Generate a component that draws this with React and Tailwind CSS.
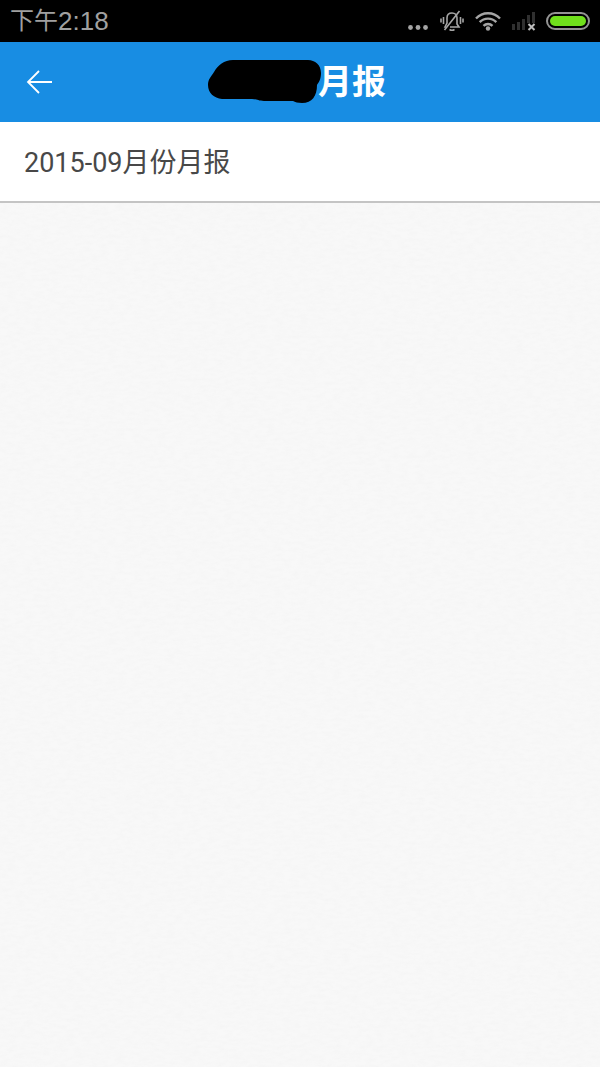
const reports = [{ id: 1, title: "2015-09月份月报" }];

const MutedBellIcon = () => (
  <svg
    className="h-6 w-6"
    viewBox="0 0 24 24"
    fill="none"
    stroke="#a5a5a5"
    strokeWidth="1.6"
    aria-hidden="true"
  >
    <path d="M10 18H19L17 15V9C17 6 15 4 12 4S7 6 7 9V14L5 18H6" />
    <path d="M9.500 20.500Q12 22 14.500 20.500M4.500 21L19.500 2" />
    <path d="M3.500 8v7M1 9.500v4M20.500 8v7M23 9.500v4" />
  </svg>
);

const WifiIcon = () => (
  <svg
    className="h-6 w-7"
    viewBox="0 0 28 24"
    fill="none"
    stroke="#a5a5a5"
    strokeWidth="2.4"
    aria-hidden="true"
  >
    <path d="M2 9.500C8.500 2.500 19.500 2.500 26 9.500" />
    <path d="M5.700 13.200c4.600-4.800 12-4.800 16.600 0" />
    <path d="M9.500 16.800c2.500-2.500 6.500-2.500 9 0" />
    <circle cx="14" cy="19.500" r="2.200" fill="#a5a5a5" stroke="none" />
  </svg>
);

const SignalIcon = () => (
  <svg className="h-6 w-6" viewBox="0 0 24 24" aria-hidden="true">
    <g fill="#303030">
      <rect x="0" y="15" width="3" height="6" />
      <rect x="5" y="13" width="3" height="8" />
      <rect x="10" y="10" width="3" height="11" />
      <rect x="15" y="6" width="3" height="8" />
      <rect x="20" y="3" width="3" height="11" />
    </g>
    <path d="M16.500 15l6 6M22.500 15l-6 6" stroke="#bdbdbd" strokeWidth="2" />
  </svg>
);

const StatusBar = () => (
  <div className="flex h-[42px] items-center justify-between bg-black px-2.5 text-[#a0a0a0]">
    <div className="flex items-center font-['Liberation_Sans','Noto_Sans_CJK_SC',sans-serif] leading-8">
      <span className="text-[24px]">下午</span>
      <span className="text-[26px]">2:18</span>
    </div>
    <div className="flex items-center">
      <svg className="mr-3 h-6 w-5" viewBox="0 0 20 24" fill="#a5a5a5" aria-hidden="true">
        <circle cx="2.500" cy="18.500" r="2.400" />
        <circle cx="10" cy="18.500" r="2.400" />
        <circle cx="17.500" cy="18.500" r="2.400" />
      </svg>
      <MutedBellIcon />
      <span className="ml-2.5">
        <WifiIcon />
      </span>
      <span className="ml-2.5">
        <SignalIcon />
      </span>
      <span className="ml-2.5 h-[18px] w-11 rounded-full border-2 border-[#949494] p-0.5">
        <span className="block h-full rounded-full bg-[#70e01c]" />
      </span>
    </div>
  </div>
);

const Header = () => (
  <header className="grid h-20 grid-cols-[80px_1fr_80px] items-center bg-[#188de3] text-white">
    <button type="button" aria-label="返回" className="flex h-full items-center pl-[26px]">
      <svg
        className="h-7 w-7"
        viewBox="0 0 28 28"
        fill="none"
        stroke="currentColor"
        strokeWidth="1.8"
        aria-hidden="true"
      >
        <path d="M26 14H2M13 3L2 14l11 11" />
      </svg>
    </button>
    <h1 className="flex items-center justify-center pr-1.5 pb-1 font-['Noto_Sans_CJK_SC',sans-serif] text-[34px] leading-[44px] font-bold">
      <svg className="-mr-1 h-11 w-[114px]" viewBox="0 0 114 44" overflow="visible" aria-hidden="true">
        <path d="M25 2H100C107 2 113 7 113 15C113 21 111 24 109 27C109 38 104 45 94 45C90 45 87 44 85 43H56C50 43 49 41 44 41H14C6 40 0 35 0 27C0 21 3 19 6 14C10 7 16 2 25 2Z" />
      </svg>
      月报
    </h1>
  </header>
);

const PaperTexture = () => (
  <svg className="absolute inset-0 h-full w-full opacity-5" aria-hidden="true">
    <filter id="paper">
      <feTurbulence type="fractalNoise" baseFrequency="0.12 0.3" numOctaves="3" />
      <feColorMatrix values="0 0 0 0 0.500  0 0 0 0 0.500  0 0 0 0 0.500  1.500 0 0 0 -0.500" />
    </filter>
    <rect width="100%" height="100%" filter="url(#paper)" />
  </svg>
);

const App = () => {
  return (
    <div className="flex min-h-screen flex-col bg-[#f8f8f8]">
      <StatusBar />
      <Header />
      <main className="relative flex-1">
        <PaperTexture />
        <ul className="relative">
          {reports.map((report) => (
            <li key={report.id} className="border-b-2 border-[#c4c4c4] bg-white">
              <a
                href="#report"
                className="block px-6 pt-[22px] pb-[18px] font-['Roboto','Noto_Sans_CJK_SC',sans-serif] text-[27px] leading-[39px] text-[#484848]"
              >
                {report.title}
              </a>
            </li>
          ))}
        </ul>
      </main>
    </div>
  );
};

export default App;
